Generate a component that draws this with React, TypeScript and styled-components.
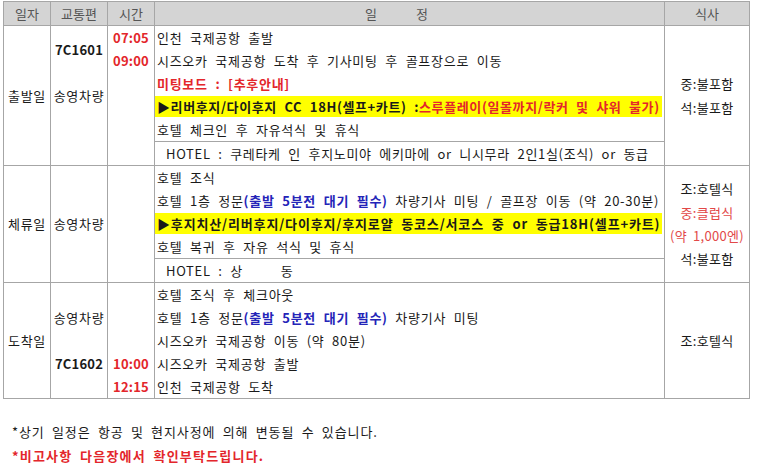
import React from 'react';
import styled, { createGlobalStyle } from 'styled-components';

const GlobalStyle = createGlobalStyle`
  html, body { margin: 0; padding: 0; background: #ffffff; }
  body {
    font-family: "Noto Sans CJK KR", "Noto Sans", sans-serif;
    color: #1a1a1a;
    font-size: 13px;
  }
`;

const LINE = 23.33;
const BORDER = '#a6a6a6';
const COLS = '47px 57px 47px 510px 85px';
const RED = '#e3262b';
const BLUE = '#2424b8';

const Page = styled.div`
  width: 757px;
  height: 466px;
  padding: 1px 0 0 3px;
  box-sizing: border-box;
  overflow: hidden;
`;

const Table = styled.div`
  width: 747px;
  border-left: 1px solid ${BORDER};
  border-top: 1px solid ${BORDER};
  box-sizing: border-box;
`;

const HeaderRow = styled.div`
  display: grid;
  grid-template-columns: ${COLS};
  height: 24px;
  background: #d4d4d4;
`;

const HeadCell = styled.div<{ $spread?: boolean }>`
  box-sizing: border-box;
  border-right: 1px solid ${BORDER};
  border-bottom: 1px solid ${BORDER};
  display: flex;
  align-items: center;
  justify-content: center;
  color: #555555;
  font-size: 13px;
  gap: ${(p) => (p.$spread ? '39px' : '0')};
  padding-right: ${(p) => (p.$spread ? '26px' : '0')};
`;

const DayRow = styled.div<{ $lines: number }>`
  display: grid;
  grid-template-columns: ${COLS};
  height: ${(p) => p.$lines * LINE}px;
`;

const Cell = styled.div`
  box-sizing: border-box;
  border-right: 1px solid ${BORDER};
  border-bottom: 1px solid ${BORDER};
  min-width: 0;
`;

const DayCell = styled(Cell)`
  display: flex;
  align-items: center;
  justify-content: center;
  letter-spacing: 0.7px;
`;

const SlotCell = styled(Cell)<{ $lines: number }>`
  display: grid;
  grid-template-rows: repeat(${(p) => p.$lines}, 1fr);
  grid-template-columns: 1fr;
  justify-items: center;
  align-items: center;
`;

const Slot = styled.div<{ $from: number; $to: number; $bold?: boolean; $red?: boolean }>`
  grid-column: 1;
  grid-row: ${(p) => p.$from} / ${(p) => p.$to};
  font-weight: ${(p) => (p.$bold ? 700 : 400)};
  color: ${(p) => (p.$red ? RED : 'inherit')};
  letter-spacing: ${(p) => (p.$bold ? '0.2px' : '0.7px')};
`;

const Schedule = styled(Cell)`
  display: flex;
  flex-direction: column;
`;

const Line = styled.div<{ $sep?: boolean; $hotel?: boolean }>`
  flex: 1 1 0;
  display: flex;
  align-items: center;
  white-space: pre;
  padding-left: ${(p) => (p.$hotel ? '11px' : '2px')};
  border-top: ${(p) => (p.$sep ? `1px solid ${BORDER}` : 'none')};
  letter-spacing: ${(p) => (p.$hotel ? '0.68px' : '0.72px')};
  word-spacing: 4px;
`;

const MarkLine = styled(Line)`
  padding-left: 0;
`;

const Mark = styled.span<{ $spacing: number }>`
  display: inline-flex;
  align-items: center;
  height: 21px;
  padding: 0 2px 0 2px;
  background: #ffff00;
  font-weight: 700;
  letter-spacing: ${(p) => p.$spacing}px;
  white-space: pre;
`;

const Tone = styled.span<{ $tone: 'red' | 'blue' }>`
  color: ${(p) => (p.$tone === 'red' ? RED : BLUE)};
  font-weight: 700;
`;

const MealCell = styled(Cell)`
  display: flex;
  flex-direction: column;
  align-items: center;
  justify-content: center;
  letter-spacing: 0.3px;
  word-spacing: 3px;
`;

const Meal = styled.div<{ $red?: boolean }>`
  height: ${LINE}px;
  display: flex;
  align-items: center;
  white-space: pre;
  color: ${(p) => (p.$red ? '#e24848' : 'inherit')};
`;

const Footer = styled.div`
  margin-top: 20px;
  padding-left: 9px;
  word-spacing: 3.5px;
`;

const Note = styled.div<{ $red?: boolean }>`
  height: 24px;
  display: flex;
  align-items: center;
  white-space: pre;
  color: ${(p) => (p.$red ? RED : '#1a1a1a')};
  font-weight: ${(p) => (p.$red ? 700 : 400)};
  letter-spacing: ${(p) => (p.$red ? '1.2px' : '0.9px')};
`;

export default function App() {
  return (
    <>
      <GlobalStyle />
      <Page>
        <Table>
          <HeaderRow>
            <HeadCell>일자</HeadCell>
            <HeadCell>교통편</HeadCell>
            <HeadCell>시간</HeadCell>
            <HeadCell $spread>
              <span>일</span>
              <span>정</span>
            </HeadCell>
            <HeadCell>식사</HeadCell>
          </HeaderRow>

          <DayRow $lines={6}>
            <DayCell>출발일</DayCell>
            <SlotCell $lines={6}>
              <Slot $from={1} $to={3} $bold>7C1601</Slot>
              <Slot $from={1} $to={7}>송영차량</Slot>
            </SlotCell>
            <SlotCell $lines={6}>
              <Slot $from={1} $to={2} $bold $red>07:05</Slot>
              <Slot $from={2} $to={3} $bold $red>09:00</Slot>
            </SlotCell>
            <Schedule>
              <Line>인천 국제공항 출발</Line>
              <Line>시즈오카 국제공항 도착 후 기사미팅 후 골프장으로 이동</Line>
              <Line>
                <Tone $tone="red">미팅보드 : [추후안내]</Tone>
              </Line>
              <MarkLine>
                <Mark $spacing={0.62}>
                  ▶리버후지/다이후지 CC 18H(셀프+카트) :<Tone $tone="red">스루플레이(일몰까지/락커 및 샤워 불가)</Tone>
                </Mark>
              </MarkLine>
              <Line>호텔 체크인 후 자유석식 및 휴식</Line>
              <Line $sep $hotel>HOTEL : 쿠레타케 인 후지노미야 에키마에 or 니시무라 2인1실(조식) or 동급</Line>
            </Schedule>
            <MealCell>
              <Meal>중:불포함</Meal>
              <Meal>석:불포함</Meal>
            </MealCell>
          </DayRow>

          <DayRow $lines={5}>
            <DayCell>체류일</DayCell>
            <SlotCell $lines={5}>
              <Slot $from={1} $to={6}>송영차량</Slot>
            </SlotCell>
            <SlotCell $lines={5} />
            <Schedule>
              <Line>호텔 조식</Line>
              <Line>
                호텔 1층 정문<Tone $tone="blue">(출발 5분전 대기 필수)</Tone> 차량기사 미팅 / 골프장 이동 (약 20-30분)
              </Line>
              <MarkLine>
                <Mark $spacing={0.85}>▶후지치산/리버후지/다이후지/후지로얄 동코스/서코스 중 or 동급18H(셀프+카트)</Mark>
              </MarkLine>
              <Line>호텔 복귀 후 자유 석식 및 휴식</Line>
              <Line $sep $hotel>HOTEL : 상     동</Line>
            </Schedule>
            <MealCell>
              <Meal>조:호텔식</Meal>
              <Meal $red>중:클럽식</Meal>
              <Meal $red>(약 1,000엔)</Meal>
              <Meal>석:불포함</Meal>
            </MealCell>
          </DayRow>

          <DayRow $lines={5}>
            <DayCell>도착일</DayCell>
            <SlotCell $lines={5}>
              <Slot $from={1} $to={4}>송영차량</Slot>
              <Slot $from={4} $to={5} $bold>7C1602</Slot>
            </SlotCell>
            <SlotCell $lines={5}>
              <Slot $from={4} $to={5} $bold $red>10:00</Slot>
              <Slot $from={5} $to={6} $bold $red>12:15</Slot>
            </SlotCell>
            <Schedule>
              <Line>호텔 조식 후 체크아웃</Line>
              <Line>
                호텔 1층 정문<Tone $tone="blue">(출발 5분전 대기 필수)</Tone> 차량기사 미팅
              </Line>
              <Line>시즈오카 국제공항 이동 (약 80분)</Line>
              <Line>시즈오카 국제공항 출발</Line>
              <Line>인천 국제공항 도착</Line>
            </Schedule>
            <MealCell>
              <Meal>조:호텔식</Meal>
            </MealCell>
          </DayRow>
        </Table>

        <Footer>
          <Note>*상기 일정은 항공 및 현지사정에 의해 변동될 수 있습니다.</Note>
          <Note $red>*비고사항 다음장에서 확인부탁드립니다.</Note>
        </Footer>
      </Page>
    </>
  );
}
